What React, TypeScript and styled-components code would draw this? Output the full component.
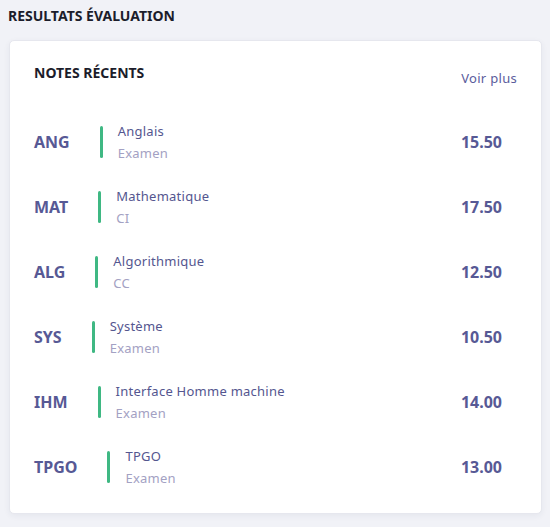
import styled, { createGlobalStyle } from "styled-components";

const GlobalStyle = createGlobalStyle`
  html, body {
    margin: 0;
    padding: 0;
    background: #f1f2f7;
    font-family: "Noto Sans", "Open Sans", sans-serif;
  }
`;

const Page = styled.div`
  padding: 6px 8px 14px 9px;
`;

const Title = styled.h1`
  margin: 0 0 14px -1px;
  font-size: 14px;
  line-height: 20px;
  font-weight: 700;
  color: #1c1d2b;
`;

const Card = styled.section`
  background: #ffffff;
  border-radius: 5px;
  border: 1px solid #e6e7ee;
  box-shadow: 0 2px 6px rgba(40, 45, 90, 0.06);
  padding: 22px 24px 14px 24px;
`;

const Header = styled.div`
  display: flex;
  justify-content: space-between;
  align-items: flex-start;
  margin-bottom: 21px;
`;

const CardTitle = styled.h2`
  margin: 0;
  font-size: 14px;
  line-height: 20px;
  font-weight: 700;
  color: #1c1d2b;
`;

const MoreLink = styled.a`
  margin-top: 5px;
  font-size: 13px;
  line-height: 20px;
  letter-spacing: 0.3px;
  color: #5a5c9c;
  cursor: pointer;
`;

const List = styled.div`
  display: flex;
  flex-direction: column;
`;

const Row = styled.div`
  display: flex;
  align-items: center;
  height: 65px;
`;

const Code = styled.span`
  font-size: 16px;
  font-weight: 700;
  color: #575995;
  margin-right: 30px;
`;

const Bar = styled.span`
  width: 3px;
  height: 32px;
  border-radius: 2px;
  background: #3fb883;
  margin-right: 15px;
  flex-shrink: 0;
`;

const Info = styled.div`
  display: flex;
  flex-direction: column;
  flex: 1;
`;

const Subject = styled.span`
  font-size: 13px;
  line-height: 22px;
  letter-spacing: 0.25px;
  color: #54568f;
`;

const Kind = styled.span`
  font-size: 13px;
  line-height: 22px;
  letter-spacing: 0.25px;
  color: #a3a1c3;
`;

const Score = styled.span`
  font-size: 16px;
  font-weight: 700;
  color: #575995;
  margin-right: 15px;
`;

const notes = [
  { code: "ANG", subject: "Anglais", kind: "Examen", score: "15.50" },
  { code: "MAT", subject: "Mathematique", kind: "CI", score: "17.50" },
  { code: "ALG", subject: "Algorithmique", kind: "CC", score: "12.50" },
  { code: "SYS", subject: "Système", kind: "Examen", score: "10.50" },
  { code: "IHM", subject: "Interface Homme machine", kind: "Examen", score: "14.00" },
  { code: "TPGO", subject: "TPGO", kind: "Examen", score: "13.00" },
];

const App = () => {
  return (
    <>
      <GlobalStyle />
      <Page>
        <Title>RESULTATS ÉVALUATION</Title>
        <Card>
          <Header>
            <CardTitle>NOTES RÉCENTS</CardTitle>
            <MoreLink>Voir plus</MoreLink>
          </Header>
          <List>
            {notes.map((n) => (
              <Row key={n.code}>
                <Code>{n.code}</Code>
                <Bar />
                <Info>
                  <Subject>{n.subject}</Subject>
                  <Kind>{n.kind}</Kind>
                </Info>
                <Score>{n.score}</Score>
              </Row>
            ))}
          </List>
        </Card>
      </Page>
    </>
  );
};

export default App;
